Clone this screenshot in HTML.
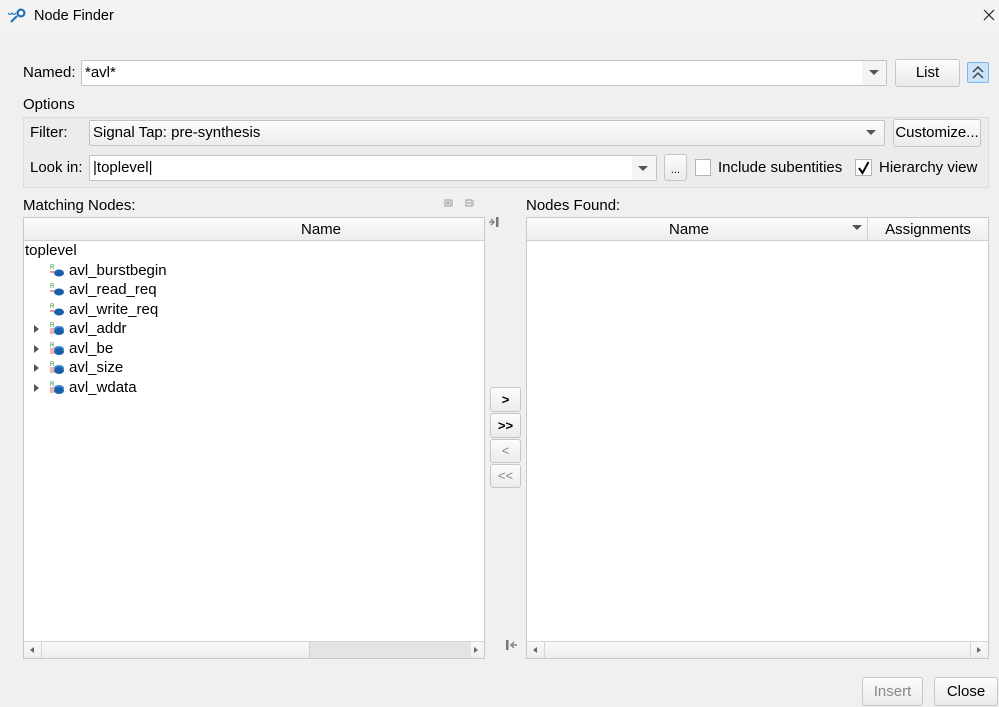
<!DOCTYPE html>
<html><head><meta charset="utf-8"><style>
*{box-sizing:border-box;margin:0;padding:0}
body{width:999px;height:707px;background:#f0f0f0;font-family:"Liberation Sans","DejaVu Sans",sans-serif;font-size:15px;color:#000;position:relative;overflow:hidden}
.a{position:absolute}
.lbl{position:absolute;line-height:18px;white-space:nowrap}
.inp{position:absolute;background:#fff;border:1px solid #c3c3c3;border-radius:2px}
.btn{position:absolute;border:1px solid #c6c6c6;border-radius:3px;background:linear-gradient(#fcfcfc,#ebebeb);text-align:center;white-space:nowrap}
.combo{position:absolute;border:1px solid #c3c3c3;border-radius:2px;background:linear-gradient(#fcfcfc,#ececec)}
.arr{position:absolute;width:0;height:0;border-left:5px solid transparent;border-right:5px solid transparent;border-top:5px solid #555}
.tree{position:absolute;background:#fff;border:1px solid #c8c8c8;overflow:hidden}
.hdr{position:absolute;top:0;height:23px;background:linear-gradient(#fbfbfb,#ededed);border-bottom:1px solid #cfcfcf;text-align:center;line-height:23px}
.row{position:absolute;left:26px;height:19px;line-height:19px;white-space:nowrap}
.row .ic{display:inline-block;width:14px;height:14px;vertical-align:-2px;margin-right:5px;position:relative}
.exp{position:absolute;left:10px;width:0;height:0;border-top:4px solid transparent;border-bottom:4px solid transparent;border-left:5px solid #555}
.sb{position:absolute;height:17px;background:linear-gradient(#f9f9f9,#eeeeee);border-top:1px solid #d6d6d6}
.sa{position:absolute;top:5px;width:0;height:0;border-top:3px solid transparent;border-bottom:3px solid transparent}
</style></head><body>
<div class="a" style="left:0;top:0;width:999px;height:33px;background:#f3f3f3"></div>
<svg class="a" style="left:7px;top:7px" width="20" height="16" viewBox="0 0 20 16"><path d="M1 6 q2 3 4 0 q2 3 4 0" stroke="#2a7bc0" fill="none" stroke-width="1.2"/><circle cx="14" cy="6" r="4.5" fill="#1d6fb8"/><circle cx="14" cy="6" r="2.3" fill="#fff"/><line x1="10" y1="9" x2="4" y2="15" stroke="#1d6fb8" stroke-width="2"/></svg>
<div class="lbl" style="left:34px;top:7px;font-size:14.5px">Node Finder</div>
<svg class="a" style="left:983px;top:9px" width="12" height="12"><path d="M1 1L11 11M11 1L1 11" stroke="#222" stroke-width="1.2"/></svg>

<div class="lbl" style="left:23px;top:64px">Named:</div>
<div class="inp" style="left:81px;top:60px;width:806px;height:26px"></div>
<div class="lbl" style="left:85px;top:64px">*avl*</div>
<div class="a" style="left:862px;top:61px;width:24px;height:24px;background:#f4f4f4"></div>
<div class="arr" style="left:869px;top:70px"></div>
<div class="btn" style="left:895px;top:59px;width:65px;height:28px;line-height:26px">List</div>
<div class="a" style="left:967px;top:62px;width:22px;height:21px;border:1px solid #7eb4ea;background:#cce4f7;border-radius:2px"></div>
<svg class="a" style="left:971px;top:65px" width="14" height="15"><path d="M2 7L7 2L12 7M2 13L7 8L12 13" stroke="#333" fill="none" stroke-width="1.3"/></svg>

<div class="lbl" style="left:23px;top:96px">Options</div>
<div class="a" style="left:23px;top:117px;width:966px;height:71px;border:1px solid #dcdcdc;background:#ececec"></div>
<div class="lbl" style="left:30px;top:124px">Filter:</div>
<div class="combo" style="left:89px;top:120px;width:796px;height:26px"></div>
<div class="lbl" style="left:93px;top:124px">Signal Tap: pre-synthesis</div>
<div class="arr" style="left:866px;top:130px"></div>
<div class="btn" style="left:893px;top:119px;width:88px;height:28px;line-height:26px">Customize...</div>
<div class="lbl" style="left:30px;top:159px">Look in:</div>
<div class="inp" style="left:89px;top:155px;width:568px;height:26px"></div>
<div class="lbl" style="left:93px;top:159px">|toplevel|</div>
<div class="a" style="left:632px;top:156px;width:24px;height:24px;background:#f4f4f4"></div>
<div class="arr" style="left:638px;top:166px"></div>
<div class="btn" style="left:664px;top:154px;width:23px;height:27px;line-height:30px;font-size:11px">...</div>
<div class="a" style="left:695px;top:159px;width:16px;height:17px;background:#fff;border:1px solid #b5b5b5"></div>
<div class="lbl" style="left:718px;top:159px">Include subentities</div>
<div class="a" style="left:855px;top:159px;width:17px;height:17px;background:#fff;border:1px solid #b5b5b5"></div>
<svg class="a" style="left:857px;top:161px" width="14" height="14"><path d="M2 7L5.5 12L11.5 1" stroke="#000" fill="none" stroke-width="2"/></svg>
<div class="lbl" style="left:879px;top:159px">Hierarchy view</div>

<div class="lbl" style="left:23px;top:197px">Matching Nodes:</div>
<svg class="a" style="left:444px;top:199px" width="32" height="10"><rect x="1" y="1" width="6" height="6" fill="none" stroke="#999"/><path d="M4 2v4M2 4h4" stroke="#999"/><path d="M8 2h1M8 4h1M8 6h1" stroke="#999"/><rect x="22" y="1" width="6" height="6" fill="none" stroke="#999"/><path d="M23 4h4" stroke="#999"/><path d="M29 2h1M29 4h1M29 6h1" stroke="#999"/></svg>
<svg class="a" style="left:488px;top:217px" width="12" height="10"><path d="M1 5h4M3 2l3 3-3 3" stroke="#888" fill="none" stroke-width="1.5"/><rect x="8" y="0" width="2.5" height="10" fill="#777"/></svg>

<div class="tree" style="left:23px;top:217px;width:462px;height:442px">
<div class="hdr" style="left:0;width:594px">Name</div>
<div class="lbl" style="left:1px;top:24px">toplevel</div>
<div class="row" style="top:43px"><span class="ic"><svg width="14" height="14"><text x="0" y="6" font-size="6" fill="#2a8a2a" font-family="Liberation Sans">R</text><line x1="0" y1="9" x2="4" y2="9" stroke="#d33"/><ellipse cx="9" cy="10" rx="5" ry="3.5" fill="#1b5fa8"/></svg></span>avl_burstbegin</div>
<div class="row" style="top:62px"><span class="ic"><svg width="14" height="14"><text x="0" y="6" font-size="6" fill="#2a8a2a" font-family="Liberation Sans">R</text><line x1="0" y1="9" x2="4" y2="9" stroke="#d33"/><ellipse cx="9" cy="10" rx="5" ry="3.5" fill="#1b5fa8"/></svg></span>avl_read_req</div>
<div class="row" style="top:82px"><span class="ic"><svg width="14" height="14"><text x="0" y="6" font-size="6" fill="#2a8a2a" font-family="Liberation Sans">R</text><line x1="0" y1="9" x2="4" y2="9" stroke="#d33"/><ellipse cx="9" cy="10" rx="5" ry="3.5" fill="#1b5fa8"/></svg></span>avl_write_req</div>
<div class="exp" style="top:107px"></div>
<div class="row" style="top:101px"><span class="ic"><svg width="14" height="14"><text x="0" y="6" font-size="6" fill="#2a8a2a" font-family="Liberation Sans">R</text><path d="M0 8h4M0 10h4M0 12h4" stroke="#d33" stroke-width=".8"/><ellipse cx="9" cy="8" rx="5" ry="3" fill="#3b87d0"/><ellipse cx="9" cy="10.5" rx="5" ry="3.5" fill="#1b5fa8"/></svg></span>avl_addr</div>
<div class="exp" style="top:127px"></div>
<div class="row" style="top:121px"><span class="ic"><svg width="14" height="14"><text x="0" y="6" font-size="6" fill="#2a8a2a" font-family="Liberation Sans">R</text><path d="M0 8h4M0 10h4M0 12h4" stroke="#d33" stroke-width=".8"/><ellipse cx="9" cy="8" rx="5" ry="3" fill="#3b87d0"/><ellipse cx="9" cy="10.5" rx="5" ry="3.5" fill="#1b5fa8"/></svg></span>avl_be</div>
<div class="exp" style="top:146px"></div>
<div class="row" style="top:140px"><span class="ic"><svg width="14" height="14"><text x="0" y="6" font-size="6" fill="#2a8a2a" font-family="Liberation Sans">R</text><path d="M0 8h4M0 10h4M0 12h4" stroke="#d33" stroke-width=".8"/><ellipse cx="9" cy="8" rx="5" ry="3" fill="#3b87d0"/><ellipse cx="9" cy="10.5" rx="5" ry="3.5" fill="#1b5fa8"/></svg></span>avl_size</div>
<div class="exp" style="top:166px"></div>
<div class="row" style="top:160px"><span class="ic"><svg width="14" height="14"><text x="0" y="6" font-size="6" fill="#2a8a2a" font-family="Liberation Sans">R</text><path d="M0 8h4M0 10h4M0 12h4" stroke="#d33" stroke-width=".8"/><ellipse cx="9" cy="8" rx="5" ry="3" fill="#3b87d0"/><ellipse cx="9" cy="10.5" rx="5" ry="3.5" fill="#1b5fa8"/></svg></span>avl_wdata</div>
<div class="sb" style="left:0;top:423px;width:460px"></div>
<div class="a" style="left:285px;top:424px;width:162px;height:16px;background:#e4e4e4;border-left:1px solid #d0d0d0"></div>
<div class="a" style="left:17px;top:424px;width:1px;height:16px;background:#d6d6d6"></div>
<div class="sa" style="left:6px;top:429px;border-right:4px solid #666"></div>
<div class="sa" style="left:450px;top:429px;border-left:4px solid #666"></div>
</div>

<div class="btn" style="left:490px;top:387px;width:31px;height:25px;line-height:23px;font-weight:bold;font-size:13px">&gt;</div>
<div class="btn" style="left:490px;top:413px;width:31px;height:25px;line-height:23px;font-weight:bold;font-size:13px">&gt;&gt;</div>
<div class="btn" style="left:490px;top:439px;width:31px;height:24px;line-height:22px;color:#888;font-size:13px">&lt;</div>
<div class="btn" style="left:490px;top:464px;width:31px;height:24px;line-height:22px;color:#888;font-size:13px">&lt;&lt;</div>
<svg class="a" style="left:506px;top:640px" width="12" height="10"><rect x="0" y="0" width="2.5" height="10" fill="#777"/><path d="M11 5H6M8 2L5 5l3 3" stroke="#888" fill="none" stroke-width="1.5"/></svg>

<div class="lbl" style="left:526px;top:197px">Nodes Found:</div>
<div class="tree" style="left:526px;top:217px;width:463px;height:442px">
<div class="hdr" style="left:0;width:341px;border-right:1px solid #cfcfcf;padding-right:16px">Name</div>
<div class="arr" style="left:325px;top:7px"></div>
<div class="hdr" style="left:341px;width:120px">Assignments</div>
<div class="sb" style="left:0;top:423px;width:461px"></div>
<div class="a" style="left:17px;top:424px;width:1px;height:16px;background:#d6d6d6"></div>
<div class="a" style="left:443px;top:424px;width:1px;height:16px;background:#d6d6d6"></div>
<div class="sa" style="left:6px;top:429px;border-right:4px solid #666"></div>
<div class="sa" style="left:450px;top:429px;border-left:4px solid #666"></div>
</div>

<div class="btn" style="left:862px;top:677px;width:61px;height:29px;line-height:28px;color:#888">Insert</div>
<div class="btn" style="left:934px;top:677px;width:64px;height:29px;line-height:28px">Close</div>
</body></html>
